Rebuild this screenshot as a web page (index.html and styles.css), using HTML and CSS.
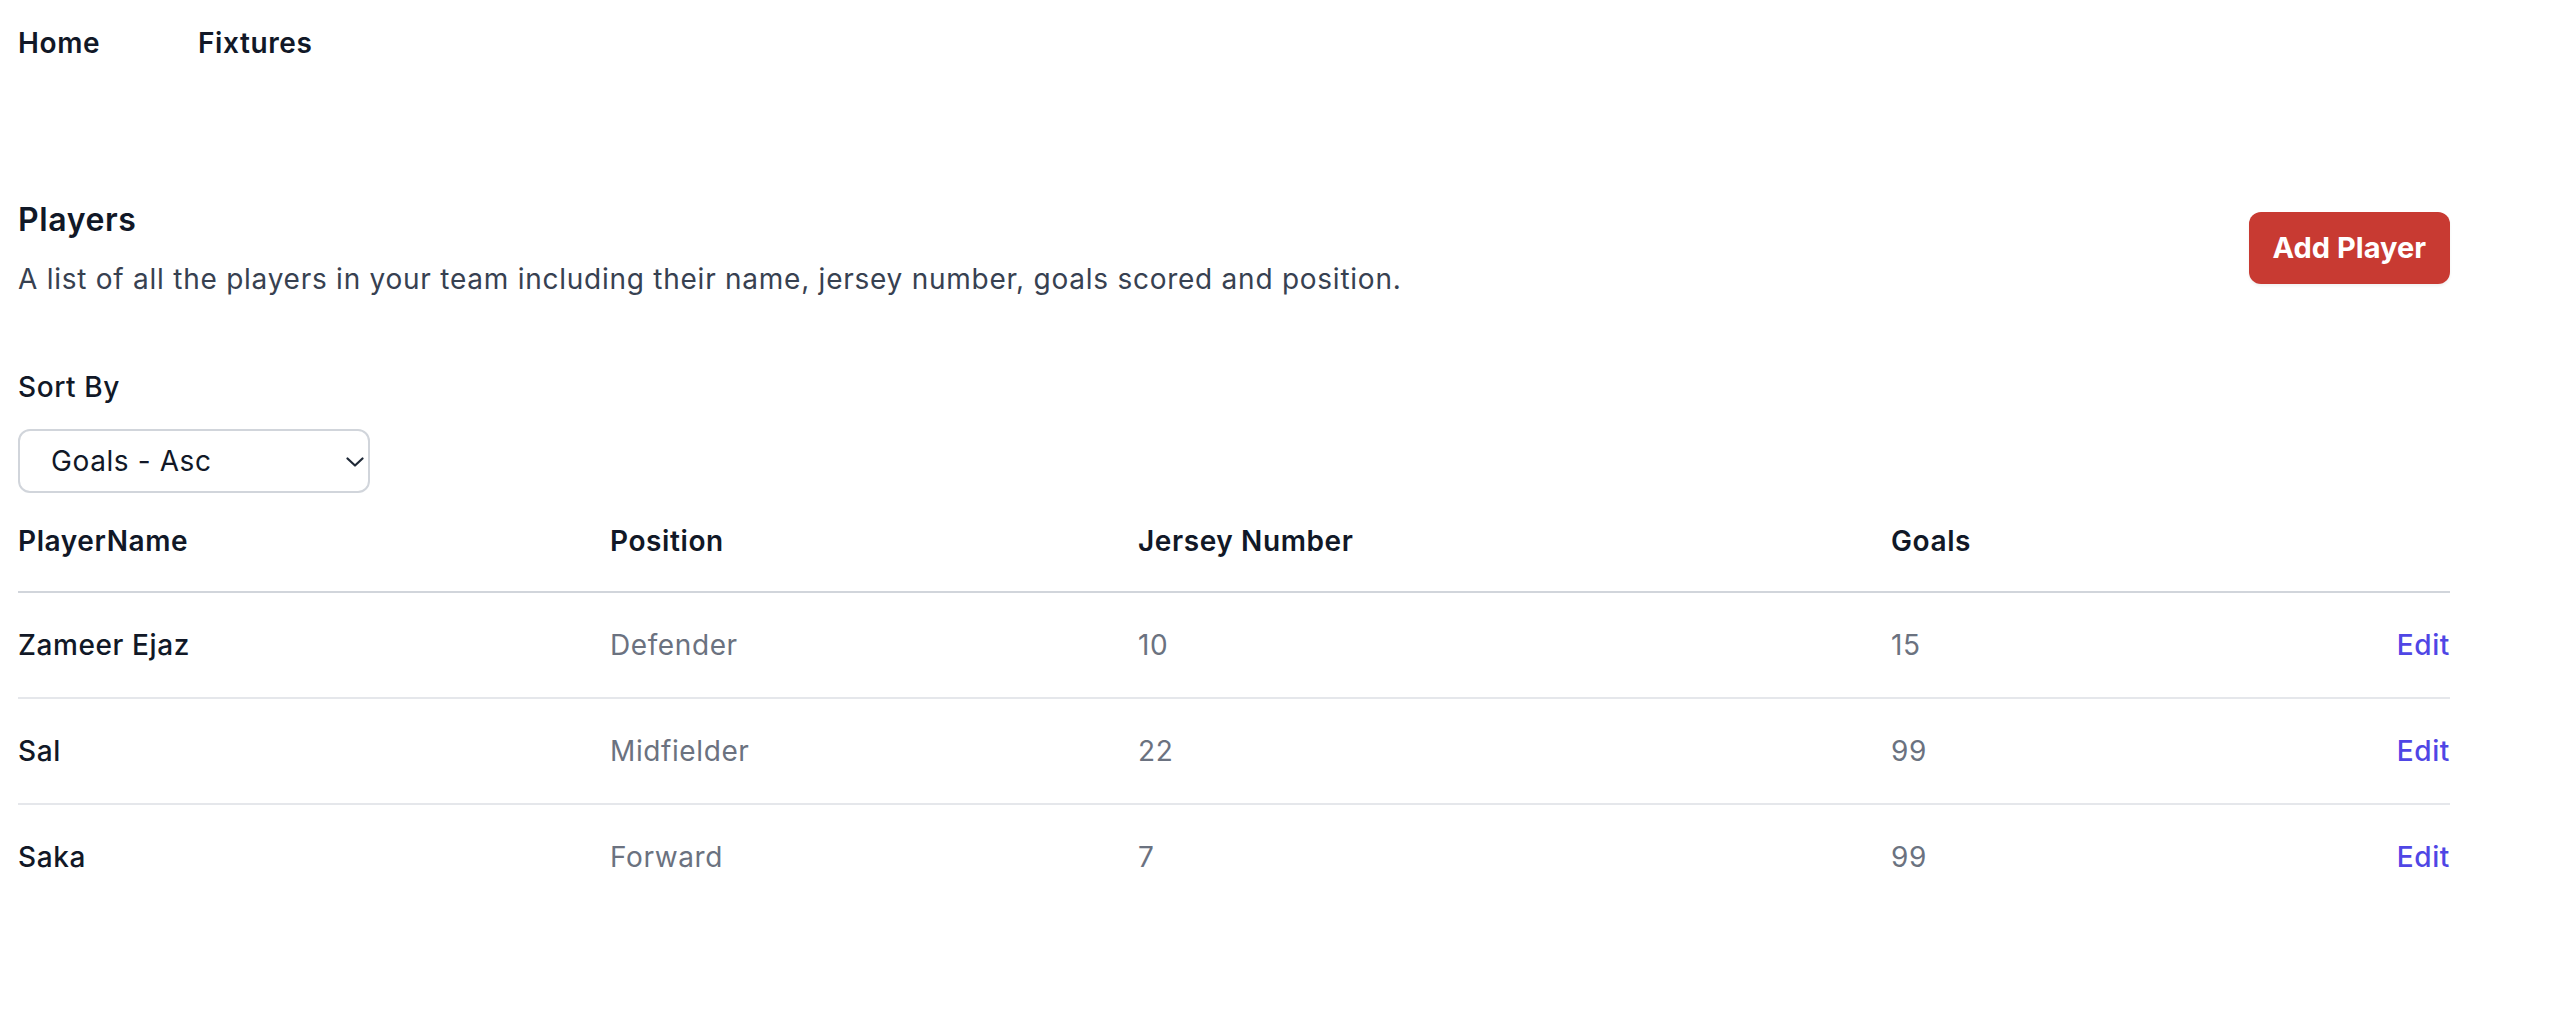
FILE: index.html
```html
<!DOCTYPE html>
<html lang="en">
<head>
<meta charset="utf-8">
<title>Players</title>
<link rel="stylesheet" href="styles.css">
</head>
<body>
<nav class="nav">
  <a class="nav-link" href="#">Home</a>
  <a class="nav-link" href="#">Fixtures</a>
</nav>
<main class="page">
  <section class="header">
    <div class="header-text">
      <h1 class="title">Players</h1>
      <p class="desc">A list of all the players in your team including their name, jersey number, goals scored and position.</p>
    </div>
    <button class="add-btn" type="button">Add Player</button>
  </section>
  <label class="sort-label" for="sort">Sort By</label>
  <div class="select-wrap">
    <select class="sort-select" id="sort">
      <option>Goals - Asc</option>
      <option>Goals - Desc</option>
    </select>
    <svg class="chevron" width="18" height="10" viewBox="0 0 18 10" aria-hidden="true"><path d="M1.5 1.5 L9 8.5 L16.5 1.5" fill="none" stroke="#1f2937" stroke-width="2.2" stroke-linecap="round" stroke-linejoin="round"/></svg>
  </div>
  <table class="players">
    <colgroup>
      <col class="c-name"><col class="c-pos"><col class="c-jersey"><col class="c-goals"><col class="c-edit">
    </colgroup>
    <thead>
      <tr>
        <th>PlayerName</th>
        <th>Position</th>
        <th>Jersey Number</th>
        <th>Goals</th>
        <th></th>
      </tr>
    </thead>
    <tbody>
      <tr>
        <td class="name">Zameer Ejaz</td>
        <td>Defender</td>
        <td>10</td>
        <td>15</td>
        <td class="edit"><a href="#">Edit</a></td>
      </tr>
      <tr>
        <td class="name">Sal</td>
        <td>Midfielder</td>
        <td>22</td>
        <td>99</td>
        <td class="edit"><a href="#">Edit</a></td>
      </tr>
      <tr>
        <td class="name">Saka</td>
        <td>Forward</td>
        <td>7</td>
        <td>99</td>
        <td class="edit"><a href="#">Edit</a></td>
      </tr>
    </tbody>
  </table>
</main>
</body>
</html>
```

FILE: styles.css
```css
* { box-sizing: border-box; }
html, body {
  margin: 0;
  background: #ffffff;
}
body {
  font-family: Inter, "Noto Sans", "Liberation Sans", sans-serif;
  color: #111827;
  letter-spacing: 0.6px;
  -webkit-font-smoothing: antialiased;
}
.nav {
  display: grid;
  grid-template-columns: 180px auto;
  justify-content: start;
  padding: 23px 18px 0;
}
.nav-link {
  font-size: 28px;
  line-height: 40px;
  font-weight: 600;
  color: #111827;
  text-decoration: none;
}
.page {
  width: 2432px;
  margin-left: 18px;
}
.header {
  display: flex;
  align-items: center;
  justify-content: space-between;
  margin-top: 133px;
}
.title {
  margin: 0;
  font-size: 32px;
  line-height: 48px;
  font-weight: 600;
  color: #111827;
}
.desc {
  margin: 15px 0 0;
  font-size: 28px;
  line-height: 40px;
  letter-spacing: 0.75px;
  color: #374151;
}
.add-btn {
  font-family: inherit;
  height: 72px;
  padding: 0 24px;
  border: 0;
  border-radius: 12px;
  background: #c83a32;
  color: #ffffff;
  font-size: 29px;
  font-weight: 700;
  letter-spacing: 0;
  box-shadow: 0 2px 3px rgba(0,0,0,0.06);
}
.sort-label {
  display: block;
  margin-top: 68px;
  font-size: 28px;
  line-height: 40px;
  font-weight: 500;
  color: #111827;
}
.select-wrap {
  position: relative;
  width: 352px;
  margin-top: 22px;
}
.sort-select {
  display: block;
  width: 352px;
  height: 64px;
  padding: 0 40px 0 31px;
  border: 2px solid #d1d5db;
  border-radius: 12px;
  background: #ffffff;
  font-family: inherit;
  font-size: 28px;
  letter-spacing: 0.6px;
  color: #111827;
  appearance: none;
  -webkit-appearance: none;
}
.chevron {
  position: absolute;
  right: 6px;
  top: 28px;
  pointer-events: none;
}
.players {
  width: 2432px;
  border-collapse: collapse;
  table-layout: fixed;
}
.c-name { width: 592px; }
.c-pos { width: 528px; }
.c-jersey { width: 753px; }
.c-goals { width: 300px; }
.c-edit { width: 259px; }
.players th {
  padding: 28px 0 30px;
  text-align: left;
  font-size: 28px;
  line-height: 40px;
  font-weight: 600;
  color: #111827;
  border-bottom: 2px solid #d1d5db;
}
.players td {
  padding: 32px 0;
  font-size: 28px;
  line-height: 40px;
  color: #6b7280;
  border-bottom: 2px solid #e5e7eb;
}
.players tbody tr:last-child td {
  border-bottom: 0;
}
.players td.name {
  font-weight: 500;
  color: #111827;
}
.players td.edit {
  text-align: right;
}
.edit a {
  color: #4f46e5;
  font-weight: 500;
  text-decoration: none;
}
```
